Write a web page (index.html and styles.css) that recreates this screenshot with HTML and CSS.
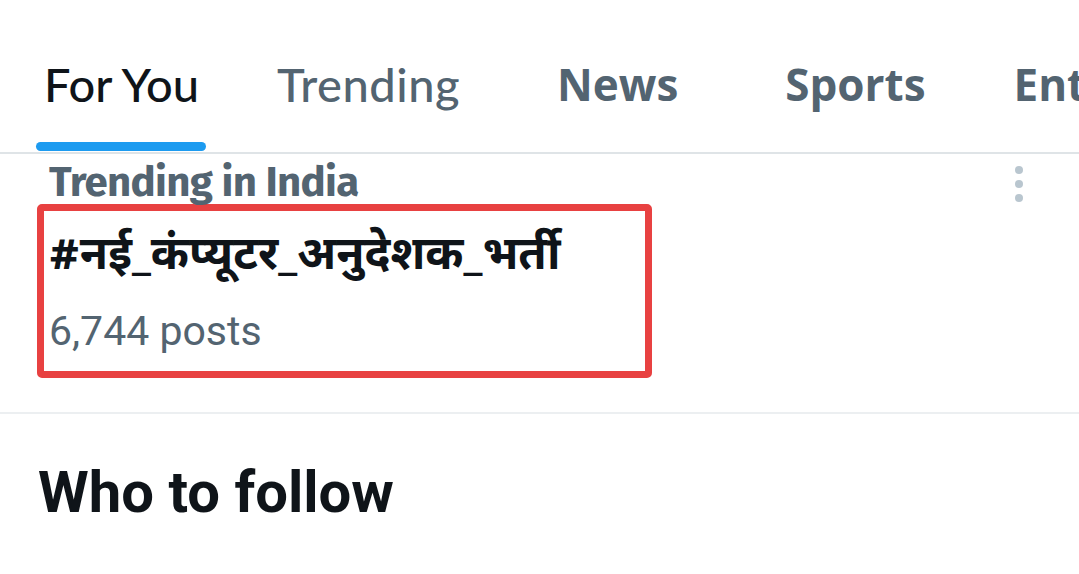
FILE: index.html
```html
<!DOCTYPE html>
<html>
<head>
<meta charset="utf-8">
<link rel="stylesheet" href="styles.css">
</head>
<body>
<div class="page">
  <nav class="tabs">
    <div class="tab active"><span class="label">For You</span><span class="bar"></span></div>
    <div class="tab trend"><span class="label">Trending</span></div>
    <div class="tab bold news"><span class="label">News</span></div>
    <div class="tab bold sports"><span class="label">Sports</span></div>
    <div class="tab bold ent"><span class="label">Entertainment</span></div>
  </nav>
  <section class="trend-item">
    <div class="trend-head">
      <span class="context">Trending in India</span>
      <span class="more"><i></i><i></i><i></i></span>
    </div>
    <div class="highlight">
      <div class="tag">#नई_कंप्यूटर_अनुदेशक_भर्ती</div>
      <div class="count">6,744 posts</div>
    </div>
  </section>
  <section class="follow">
    <h2>Who to follow</h2>
  </section>
</div>
</body>
</html>
```
FILE: styles.css
```css
* { box-sizing: border-box; }
html, body { margin: 0; padding: 0; background: #fff; }
body { width: 1079px; height: 574px; overflow: hidden; }
.page { width: 1079px; overflow: hidden; }
.tabs {
  display: flex;
  height: 154px;
  border-bottom: 2px solid #dfe4e7;
  white-space: nowrap;
  padding-top: 56px;
  width: 1400px;
}
.tab {
  position: relative;
  flex: none;
  font-family: Lato, sans-serif;
  font-weight: 500;
  font-size: 47px;
  color: #536471;
  line-height: 56px;
}
.tab.active { color: #0f1419; margin-left: 44px; }
.tab.trend { margin-left: 78px; letter-spacing: 0.5px; }
.tab.bold { font-family: "Open Sans", sans-serif; font-weight: 700; font-size: 44px; }
.tab.news { margin-left: 97px; }
.tab.sports { margin-left: 107px; }
.tab.ent { margin-left: 88px; }
.bar {
  position: absolute;
  left: -8px;
  right: -7px;
  top: 86px;
  height: 9px;
  border-radius: 5px;
  background: #1d9bf0;
}
.trend-item {
  padding: 7px 0 34px 37px;
  border-bottom: 2px solid #eceff1;
}
.trend-head {
  display: flex;
  justify-content: space-between;
  align-items: flex-start;
  padding-left: 12px;
  padding-right: 56px;
}
.context {
  font-family: "Fira Sans", "Open Sans", sans-serif;
  font-weight: 700;
  font-size: 42px;
  letter-spacing: -0.7px;
  color: #536471;
  line-height: 43px;
}
.more {
  display: flex;
  flex-direction: column;
  gap: 6px;
  padding-top: 5px;
}
.more i {
  display: block;
  width: 8px;
  height: 8px;
  border-radius: 50%;
  background: #b9c6cf;
}
.highlight {
  width: 615px;
  height: 174px;
  border: 7px solid #e84141;
  border-radius: 5px;
  padding: 17px 0 0 5px;
}
.tag {
  font-family: "Noto Sans Devanagari", "Noto Sans", sans-serif;
  font-weight: 700;
  font-size: 46px;
  color: #0f1419;
  line-height: 60px;
}
.count {
  font-family: Roboto, sans-serif;
  font-size: 41px;
  color: #536471;
  line-height: 48px;
  margin-top: 19px;
}
.follow { padding: 44px 0 0 38px; }
.follow h2 {
  margin: 0;
  font-family: Roboto, sans-serif;
  font-weight: 700;
  font-size: 58px;
  color: #0f1419;
  line-height: 68px;
}
```
